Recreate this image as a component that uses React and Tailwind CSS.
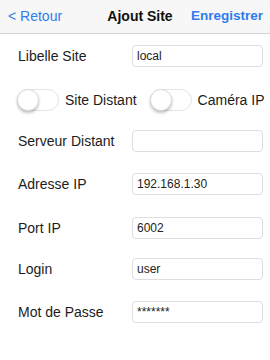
import React from "react";

function Toggle() {
  return (
    <div className="relative w-[42px] h-[22px] rounded-full border border-[#e3e3e3] bg-white shrink-0">
      <div className="absolute left-[-1px] top-[-1px] w-[22px] h-[22px] rounded-full bg-white border border-[#dcdcdc] shadow-[0_2px_3px_rgba(0,0,0,0.25)]" />
    </div>
  );
}

function Row({ label, value, mt }) {
  return (
    <div className={`flex items-center h-[22px] ${mt}`}>
      <div className="w-[132px] pl-[18px] text-[14px] text-[#1c1c1c] shrink-0 whitespace-nowrap">{label}</div>
      <div className="w-[131px] h-[22px] rounded-[4px] border border-[#dedede] bg-white flex items-center pl-[4px] text-[12px] text-[#222]">
        {value}
      </div>
    </div>
  );
}

export default function App() {
  return (
    <div className="w-[270px] h-[360px] bg-white overflow-hidden" style={{ fontFamily: '"Liberation Sans", Arial, sans-serif' }}>
      <div className="h-[34px] bg-[#f7f7f7] border-b border-[#d4d4d4] flex items-center pl-[8px] pr-[7px] text-[14px]">
        <div className="text-[#2f7cf0] w-[80px]">&lt; Retour</div>
        <div className="flex-1 text-center font-bold text-[#111] pl-[3px]">Ajout Site</div>
        <div className="text-[#2f7cf0] font-bold text-[13.5px] w-[74px] text-right">Enregistrer</div>
      </div>
      <Row label="Libelle Site" value="local" mt="mt-[11px]" />
      <div className="flex items-center h-[22px] mt-[22px] pl-[17px] text-[14px] text-[#1c1c1c] whitespace-nowrap">
        <Toggle />
        <span className="ml-[6px]">Site Distant</span>
        <div className="ml-[13px]"><Toggle /></div>
        <span className="ml-[6px]">Caméra IP</span>
      </div>
      <Row label="Serveur Distant" value="" mt="mt-[19px]" />
      <Row label="Adresse IP" value="192.168.1.30" mt="mt-[21px]" />
      <Row label="Port IP" value="6002" mt="mt-[22px]" />
      <Row label="Login" value="user" mt="mt-[19px]" />
      <Row label="Mot de Passe" value="*******" mt="mt-[21px]" />
    </div>
  );
}
